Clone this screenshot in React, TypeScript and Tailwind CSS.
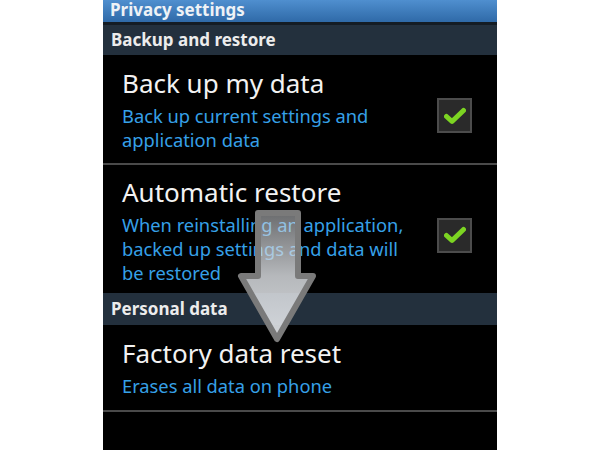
import React from "react";

type Item = {
  title: string;
  lines: string[];
  checked?: boolean;
  className: string;
};

const CheckBox = () => (
  <div className="w-[35px] h-[35px] shrink-0 bg-[#2a2a2a] border-2 border-[#4c4c4c] flex items-center justify-center">
    <svg width="22" height="18" viewBox="0 0 22 18">
      <path
        d="M2.5 9.5 L8 14.5 L19.5 3.5"
        fill="none"
        stroke="#7cd422"
        strokeWidth="5"
        strokeLinecap="round"
        strokeLinejoin="round"
      />
    </svg>
  </div>
);

const SectionHeader = ({ label, h }: { label: string; h: string }) => (
  <div
    className={`${h} bg-[#23303d] flex items-center pl-[8px] text-[17px] font-bold text-[#ececec]`}
  >
    {label}
  </div>
);

const Row = ({ item }: { item: Item }) => (
  <div className={`${item.className} flex items-center pl-[19px] pr-[25px]`}>
    <div className="flex-1 self-start">
      <div className="text-[26px] leading-[30px] text-[#f2f2f2]">{item.title}</div>
      <div className="mt-[6px] text-[18.3px] leading-[24px] text-[#36a0e8]">
        {item.lines.map((l) => (
          <div key={l}>{l}</div>
        ))}
      </div>
    </div>
    {item.checked && <CheckBox />}
  </div>
);

const Arrow = () => (
  <svg
    className="absolute left-[134px] top-[210px]"
    width="80"
    height="134"
    viewBox="0 0 80 134"
  >
    <defs>
      <linearGradient id="af" x1="0" y1="0" x2="0" y2="1">
        <stop offset="0" stopColor="#d6d9dd" stopOpacity="0.5" />
        <stop offset="0.5" stopColor="#d6d9dd" stopOpacity="0.85" />
        <stop offset="1" stopColor="#d9dce0" stopOpacity="0.97" />
      </linearGradient>
    </defs>
    <polygon
      points="21,3 61,3 61,66 76,66 40,129 4,66 21,66"
      fill="url(#af)"
      stroke="#7a7a7a"
      strokeWidth="6"
      strokeLinejoin="round"
    />
  </svg>
);

export default function App() {
  const backup: Item[] = [
    {
      title: "Back up my data",
      lines: ["Back up current settings and", "application data"],
      checked: true,
      className: "h-[108px] pt-[13px]",
    },
    {
      title: "Automatic restore",
      lines: [
        "When reinstalling an application,",
        "backed up settings and data will",
        "be restored",
      ],
      checked: true,
      className: "h-[128px] pt-[12px]",
    },
  ];

  return (
    <div
      className="w-[600px] h-[450px] bg-white flex justify-center overflow-hidden"
      style={{ fontFamily: '"Noto Sans", "Open Sans", sans-serif' }}
    >
      <div className="relative w-[394px] h-[450px] bg-black flex flex-col">
        <div className="h-[22px] bg-gradient-to-b from-[#4f8fcf] to-[#2f6aa8] overflow-hidden pl-[7px]">
          <div className="text-[17px] font-bold text-[#eef2f6] leading-[20px]">
            Privacy settings
          </div>
        </div>
        <div className="h-[3px] bg-[#141c24]" />
        <SectionHeader label="Backup and restore" h="h-[30px]" />
        <Row item={backup[0]} />
        <div className="h-[2px] bg-[#4a4a4a]" />
        <Row item={backup[1]} />
        <SectionHeader label="Personal data" h="h-[32px]" />
        <Row
          item={{
            title: "Factory data reset",
            lines: ["Erases all data on phone"],
            className: "h-[85px] pt-[13px]",
          }}
        />
        <div className="h-[2px] bg-[#4a4a4a]" />
        <Arrow />
      </div>
    </div>
  );
}
